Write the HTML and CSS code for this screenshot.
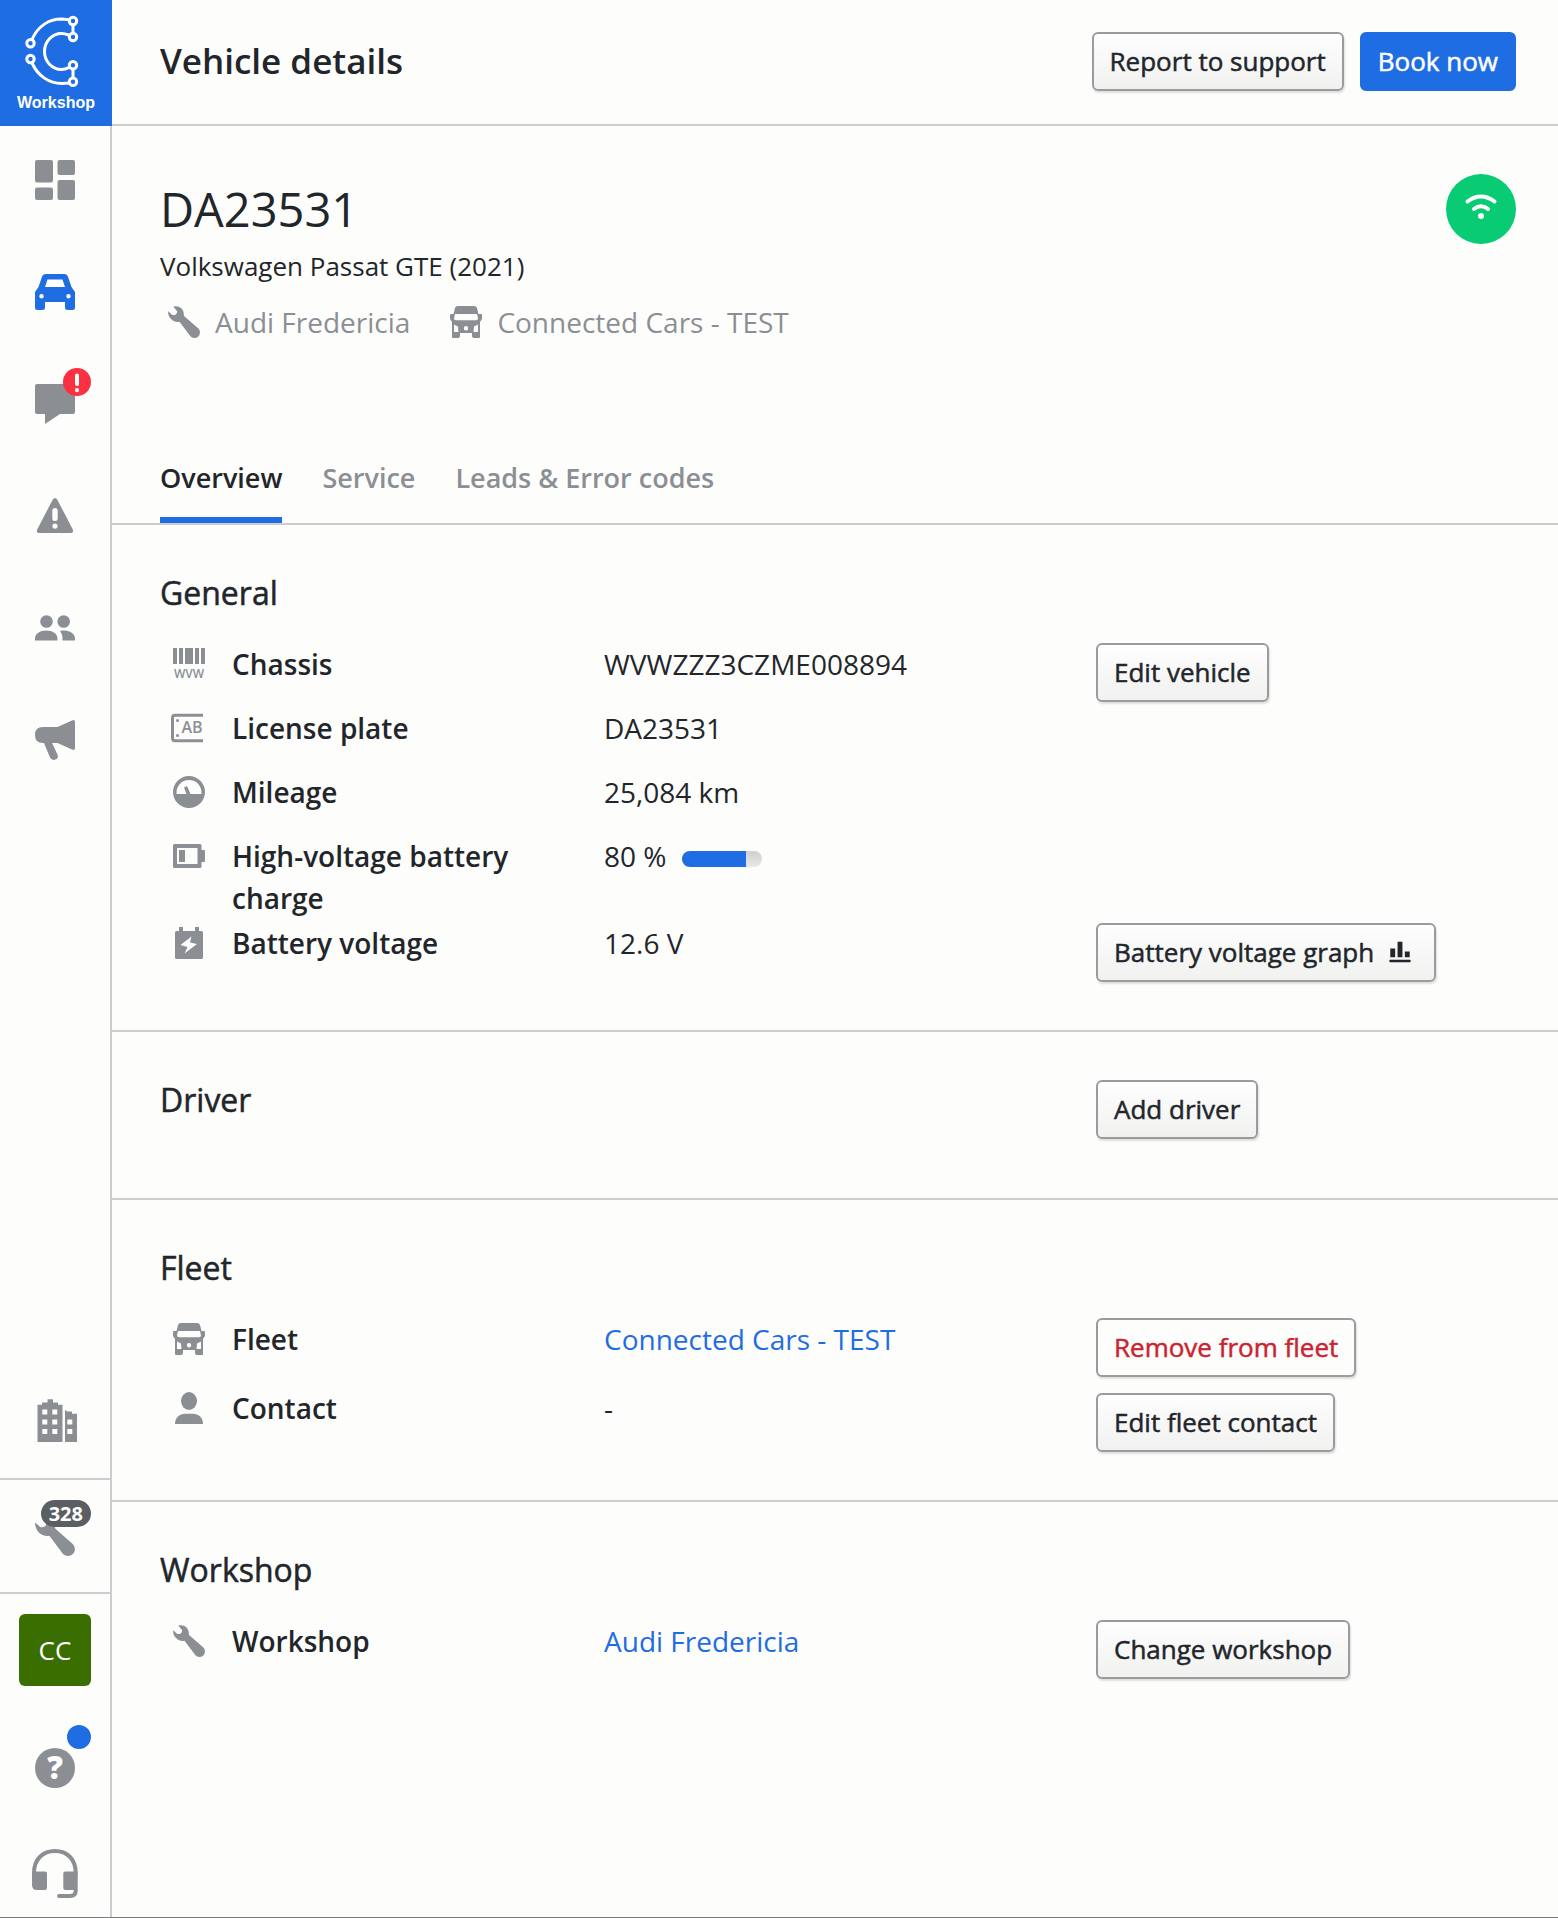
FILE: index.html
```html
<!DOCTYPE html>
<html lang="en">
<head>
<meta charset="utf-8">
<meta name="viewport" content="width=device-width, initial-scale=1">
<title>Vehicle details</title>
<link rel="stylesheet" href="styles.css">
</head>
<body>
<svg class="sprite" width="0" height="0" aria-hidden="true">
  <symbol id="wrench" viewBox="0 0 32 32"><path d="M5.300.6C10.800-1.200 16.200 3 15.800 8.800L16.300 10.200 30.400 22.500A5.500 5.500 0 0 1 22.400 30.300L11.500 15.800C5.500 17-.5 11.500.2 5.200L4.400 8.900Q8.600 9.600 9.300 5.400Z"/></symbol>
  <symbol id="van" viewBox="0 0 32 32"><path fill-rule="evenodd" d="M8 0H24Q26.500 0 27 2L28.500 8H31Q32 8 32 9V13L30 16V31Q30 32 29 32H24Q22 32 22 30V27H10V30Q10 32 8 32H3Q2 32 2 31V16L0 13V9Q0 8 1 8H3.500L5 2Q5.500 0 8 0ZM5 8 4 12.500Q4 14.300 6 14.300H26Q28 14.300 28 12.500L27 8ZM4 18.500V26H8.500L8 20.500ZM28 18.500 24 20.500 23.500 26H28ZM16 20A2.200 2.200 0 1 0 16 24.400 2.200 2.200 0 1 0 16 20Z"/></symbol>
</svg>
<div class="app">
  <aside class="sidebar">
    <a class="brand" href="#">
      <svg class="brand-mark" viewBox="0 0 112 90" aria-hidden="true">
        <g fill="none" stroke="currentColor" stroke-width="3">
          <path d="M32 39.500C38 26 49 19 62 19L69 19.700M68.700 35C66 34 64 33.500 61.500 33.500A17 18 0 0 0 61.500 69.500C64 69.500 66 69 68.800 67.500M32 63C38 76 49 83.500 62 83.500L69 83M73 25V33M73 69.500V77.500"/>
          <circle cx="73" cy="21" r="3.700"/><circle cx="73" cy="37" r="3.700"/><circle cx="30.500" cy="43.300" r="3.700"/><circle cx="30.500" cy="59" r="3.700"/><circle cx="73" cy="65.300" r="3.700"/><circle cx="73" cy="81.700" r="3.700"/>
        </g>
      </svg>
      <span class="brand-name">Workshop</span>
    </a>
    <nav class="nav" aria-label="Main">
      <a class="nav-item" href="#" aria-label="Dashboard"><svg class="nav-icon" viewBox="0 0 40 40"><rect width="18" height="22.500" rx="2"/><rect x="22.500" width="17.500" height="15" rx="2"/><rect y="27.500" width="18" height="12.500" rx="2"/><rect x="22.500" y="20" width="17.500" height="20" rx="2"/></svg></a>
      <a class="nav-item nav-item-active" href="#" aria-label="Vehicles" aria-current="page"><svg class="nav-icon" viewBox="0 -2 40 40"><path fill-rule="evenodd" d="M11 0H29C31 0 32.300 1 33 2.700L36.500 13 40 18V33.500Q40 36 37.500 36H33Q30 36 30 33.500V28H10V33.500Q10 36 7 36H2.500Q0 36 0 33.500V18L3.500 13 7 2.700C7.700 1 9 0 11 0ZM12.500 5.500 10 13H30L27.500 5.500ZM6.500 20A2.200 2.200 0 1 0 6.500 24.400 2.200 2.200 0 1 0 6.500 20ZM33.500 20A2.200 2.200 0 1 0 33.500 24.400 2.200 2.200 0 1 0 33.500 20Z"/></svg></a>
      <a class="nav-item" href="#" aria-label="Messages"><span class="nav-anchor"><svg class="nav-icon" viewBox="0 0 40 40"><path d="M2 0H38Q40 0 40 2V28Q40 30 38 30H25L10 40V30H2Q0 30 0 28V2Q0 0 2 0Z"/></svg><svg class="badge badge-alert" viewBox="0 0 28 28"><circle class="alert-fill" cx="14" cy="14" r="14"/><path class="alert-mark" d="M14 7.500V16M14 22V22.200"/></svg></span></a>
      <a class="nav-item" href="#" aria-label="Warnings"><svg class="nav-icon" viewBox="0 0 40 40"><path fill-rule="evenodd" d="M17.800 3.400Q20 .4 22.200 3.400L37.800 33.500Q39 37 36 37H4Q1 37 2.200 33.500ZM20 12Q17.300 12 17.300 14.500V22.500Q17.300 25 20 25T22.700 22.500V14.500Q22.700 12 20 12ZM20 27.500A2.600 2.600 0 1 0 20 32.700 2.600 2.600 0 1 0 20 27.500Z"/></svg></a>
      <a class="nav-item" href="#" aria-label="Customers"><svg class="nav-icon" viewBox="0 0 40 40"><circle cx="11.500" cy="13.500" r="6.300"/><circle cx="28.700" cy="13.500" r="6.300"/><path d="M0 32.500V30.500C0 25.500 5 22.500 11.300 22.500S22.500 25.500 22.500 30.500V32.500ZM25 23C34 21 40 25.500 40 30.500V32.500H27.500C27.500 28.500 27.500 26.500 25 23Z"/></svg></a>
      <a class="nav-item" href="#" aria-label="Campaigns"><svg class="nav-icon" viewBox="0 0 40 40"><path d="M8 7H22.500L37 .4Q40-.6 40 2V28Q40 31 37 29.600L22.500 23H17L22.500 34.500Q24 38 20.500 39.500 17 41 15 37.500L9 23H8Q0 23 0 15T8 7Z"/></svg></a>
    </nav>
    <div class="nav nav-bottom">
      <a class="nav-item" href="#" aria-label="Organisation"><svg class="nav-icon-large" viewBox="0 0 44 44"><path fill-rule="evenodd" d="M4.500 44V6.700H9V4.600H14.500V1.300H20V4.600H25V6.700H29.500V44ZM9.300 11.500V16.500H14.300V11.500ZM19.300 11.500V16.500H24.300V11.500ZM9.300 21.500V26.500H14.300V21.500ZM19.300 21.500V26.500H24.300V21.500ZM9.300 31V36H14.300V31ZM19.300 31V36H24.300V31ZM32 44V12L34.500 13.500H39V15.800H44V44ZM34.300 21.500V26.500H39.300V21.500ZM34.300 31V36H39.300V31Z"/></svg></a>
    </div>
    <div class="side-cell side-cell-lined">
      <a class="nav-anchor" href="#" aria-label="Jobs"><svg class="nav-icon"><use href="#wrench"/></svg><span class="badge badge-count">328</span></a>
    </div>
    <div class="side-cell"><button class="avatar" type="button">CC</button></div>
    <div class="side-cell side-cell-help">
      <a class="nav-anchor" href="#" aria-label="Help"><svg class="nav-icon" viewBox="0 0 40 40"><circle cx="20" cy="20" r="20"/><text class="help-mark" x="20" y="31" text-anchor="middle">?</text></svg><span class="badge badge-dot"></span></a>
    </div>
    <div class="side-cell side-cell-support">
      <a class="nav-anchor" href="#" aria-label="Support"><svg class="headset" viewBox="0 0 48 48"><path d="M1 22.500H14Q16 22.500 16 24.500V39Q16 41 14 41H6Q1 41 1 36ZM46.700 22.500H34.300Q32.300 22.500 32.300 24.500V39Q32.300 41 34.300 41H44Z"/><path fill="none" stroke="currentColor" stroke-width="4" stroke-linecap="round" d="M3 24C3 10 12 2 24 2S44.700 10 44.700 24V42Q44.700 47 39 47H28"/></svg></a>
    </div>
  </aside>

  <div class="page">
    <header class="topbar">
      <h1 class="page-title">Vehicle details</h1>
      <div class="topbar-actions">
        <button class="button" type="button">Report to support</button>
        <button class="button button-primary" type="button">Book now</button>
      </div>
    </header>

    <main>
      <section class="hero">
        <div class="hero-head">
          <h2 class="plate">DA23531</h2>
          <svg class="online" viewBox="0 0 70 70" role="img" aria-label="Online"><circle cx="35" cy="35" r="35"/><path class="online-waves" d="M21.500 27.500Q35 17.500 48.500 27.500M28 35Q35 29.500 42 35"/><circle class="online-dot" cx="35" cy="42" r="3"/></svg>
        </div>
        <p class="model">Volkswagen Passat GTE (2021)</p>
        <ul class="meta">
          <li class="meta-item"><svg class="icon"><use href="#wrench"/></svg>Audi Fredericia</li>
          <li class="meta-item"><svg class="icon"><use href="#van"/></svg>Connected Cars - TEST</li>
        </ul>
      </section>

      <nav class="tabs" aria-label="Vehicle">
        <a class="tab tab-active" href="#" aria-current="page">Overview</a>
        <a class="tab" href="#">Service</a>
        <a class="tab" href="#">Leads &amp; Error codes</a>
      </nav>

      <section class="section">
        <h3 class="section-title">General</h3>
        <div class="section-body">
          <dl class="list">
            <div class="row">
              <svg class="icon" viewBox="0 0 32 32"><path d="M0 0H4V16H0ZM6 0H10V16H6ZM12 0H20V16H12ZM22 0H26V16H22ZM28 0H32V16H28Z"/><text class="icon-vin" x="16" y="30" text-anchor="middle">WVW</text></svg>
              <dt>Chassis</dt><dd>WVWZZZ3CZME008894</dd>
            </div>
            <div class="row">
              <svg class="icon" viewBox="0 0 32 32"><path class="icon-line" d="M30 3.300H2Q-.5 3.300-.5 6V26Q-.5 28.700 2 28.700H30"/><circle cx="4.500" cy="8.500" r="1.500"/><circle cx="4.500" cy="23.500" r="1.500"/><text class="icon-plate" x="19" y="21" text-anchor="middle">AB</text></svg>
              <dt>License plate</dt><dd>DA23531</dd>
            </div>
            <div class="row">
              <svg class="icon" viewBox="0 0 32 32"><path fill-rule="evenodd" d="M16 0A16 16 0 1 0 16 32 16 16 0 1 0 16 0ZM3.600 18A12.500 12.500 0 1 1 28.400 18H17.500L14 10 11 11.500 13.500 18Z"/></svg>
              <dt>Mileage</dt><dd>25,084 km</dd>
            </div>
            <div class="row">
              <svg class="icon" viewBox="0 0 32 32"><path fill-rule="evenodd" d="M1.500 4H27Q28.500 4 28.500 5.500V10H31Q32 10 32 11V21Q32 22 31 22H28.500V26.500Q28.500 28 27 28H1.500Q0 28 0 26.500V5.500Q0 4 1.500 4ZM4 8V24H24.500V8ZM6 10H12V22H6Z"/></svg>
              <dt>High-voltage battery charge</dt>
              <dd class="charge">80 %<span class="meter" role="meter" aria-label="Battery charge" aria-valuemin="0" aria-valuemax="100" aria-valuenow="80"><span class="meter-fill" style="width: 80%"></span></span></dd>
            </div>
            <div class="row">
              <svg class="icon" viewBox="0 0 32 32"><path fill-rule="evenodd" d="M6 4V0H10V4H22V0H26V4H28.500Q30 4 30 5.500V30.500Q30 32 28.500 32H3.500Q2 32 2 30.500V5.500Q2 4 3.500 4ZM18.500 9.500 7.500 18 14.500 20 11.500 26.500 24 17 17 15.500Z"/></svg>
              <dt>Battery voltage</dt><dd>12.6 V</dd>
            </div>
          </dl>
          <div class="actions">
            <button class="button" type="button">Edit vehicle</button>
            <button class="button" type="button">Battery voltage graph<svg class="chart" viewBox="0 0 36 36"><path d="M8 14H13V23H8ZM15.500 7H20.500V23H15.500ZM23 17H28V23H23Z"/><rect x="7" y="25.500" width="22" height="2.500" rx="1"/></svg></button>
          </div>
        </div>
      </section>

      <section class="section section-inline">
        <h3 class="section-title">Driver</h3>
        <div><button class="button" type="button">Add driver</button></div>
      </section>

      <section class="section">
        <h3 class="section-title">Fleet</h3>
        <div class="section-body">
          <dl class="list list-roomy">
            <div class="row"><svg class="icon"><use href="#van"/></svg><dt>Fleet</dt><dd><a class="link" href="#">Connected Cars - TEST</a></dd></div>
            <div class="row"><svg class="icon" viewBox="0 0 32 32"><ellipse cx="16" cy="9" rx="8" ry="9"/><path d="M2 32C2 25 7 21.700 12 21.700H20C25 21.700 30 25 30 32Z"/></svg><dt>Contact</dt><dd>-</dd></div>
          </dl>
          <div class="actions">
            <button class="button button-danger" type="button">Remove from fleet</button>
            <button class="button" type="button">Edit fleet contact</button>
          </div>
        </div>
      </section>

      <section class="section">
        <h3 class="section-title">Workshop</h3>
        <div class="section-body">
          <dl class="list">
            <div class="row"><svg class="icon"><use href="#wrench"/></svg><dt>Workshop</dt><dd><a class="link" href="#">Audi Fredericia</a></dd></div>
          </dl>
          <div class="actions">
            <button class="button" type="button">Change workshop</button>
          </div>
        </div>
      </section>
    </main>
  </div>
</div>
</body>
</html>
```
FILE: styles.css
```css
:root {
  --text: #22262b;
  --muted: #8b8f94;
  --line: #cdcdcf;
  --blue: #1f6de2;
  --bg: #fdfdfc;
}

* {
  box-sizing: border-box;
}

body {
  margin: 0;
  background: var(--bg);
  color: var(--text);
  font-family: "Open Sans", "Noto Sans", sans-serif;
  font-size: 28px;
  line-height: 42px;
}

h1, h2, h3, p, ul, dl, dd {
  margin: 0;
  padding: 0;
}

a {
  color: inherit;
  text-decoration: none;
}

svg {
  display: block;
  fill: currentColor;
  flex: none;
  overflow: visible;
}

.sprite {
  position: absolute;
}

.app {
  display: flex;
  min-height: 100vh;
  border-bottom: 1px solid #77797c;
}

/* Sidebar */
.sidebar {
  display: flex;
  flex-direction: column;
  flex: none;
  width: 112px;
  border-right: 2px solid var(--line);
  color: var(--muted);
}

.brand {
  width: 112px;
  height: 126px;
  background: var(--blue);
  color: #fff;
  text-align: center;
}

.brand-mark {
  width: 112px;
  height: 90px;
}

.brand-name {
  display: block;
  font: bold 16px/26px "Liberation Sans", sans-serif;
}

.nav {
  display: flex;
  flex-direction: column;
  gap: 4px;
}

.nav-bottom {
  margin-top: auto;
  padding-bottom: 4px;
}

.nav-item {
  display: flex;
  align-items: center;
  justify-content: center;
  height: 108px;
}

.nav-item-active {
  color: var(--blue);
}

.nav-anchor {
  position: relative;
}

.nav-icon {
  width: 40px;
  height: 40px;
}

.nav-icon-large {
  width: 44px;
  height: 44px;
}

.headset {
  width: 48px;
  height: 48px;
}

.badge {
  position: absolute;
  right: -16px;
}

.badge-alert {
  top: -16px;
  width: 28px;
  height: 28px;
}

.alert-fill {
  fill: #fb3040;
}

.alert-mark {
  stroke: #fff;
  stroke-width: 4px;
  stroke-linecap: round;
}

.badge-count {
  top: -16px;
  padding: 0 8px;
  border-radius: 14px;
  background: #5b5f63;
  color: #fff;
  font-size: 20px;
  font-weight: 700;
  line-height: 27px;
}

.badge-dot {
  top: -23px;
  width: 24px;
  height: 24px;
  border-radius: 50%;
  background: var(--blue);
}

.side-cell {
  display: flex;
  align-items: center;
  justify-content: center;
  height: 112px;
}

.side-cell-lined {
  height: 116px;
  border-top: 2px solid var(--line);
  border-bottom: 2px solid var(--line);
}

.side-cell-help {
  height: 124px;
}

.side-cell-support {
  height: 87px;
  padding-bottom: 2px;
}

.help-mark {
  fill: #fff;
  font-size: 31px;
  font-weight: 800;
}

.avatar {
  width: 72px;
  height: 72px;
  padding: 0;
  border: 0;
  border-radius: 6px;
  background: #3b6e00;
  color: #fff;
  font: inherit;
  font-size: 26px;
}

/* Page */
.page {
  flex: 1;
  min-width: 0;
}

.topbar {
  display: flex;
  align-items: center;
  justify-content: space-between;
  height: 126px;
  padding: 0 42px 2px 48px;
  border-bottom: 2px solid var(--line);
}

.page-title {
  font-size: 35px;
  font-weight: 600;
}

.topbar-actions {
  display: flex;
  gap: 16px;
}

.button {
  display: inline-flex;
  align-items: center;
  gap: 8px;
  padding: 10px 16px;
  border: 2px solid #999b9f;
  border-radius: 6px;
  background: linear-gradient(#fefefe, #f1f1f0);
  box-shadow: 1px 2px 2px rgba(0, 0, 0, 0.12);
  color: var(--text);
  font: 500 26px/35px "Open Sans", "Noto Sans", sans-serif;
  -webkit-text-stroke: 0.5px;
  white-space: nowrap;
}

.button-primary {
  border-color: var(--blue);
  background: var(--blue);
  box-shadow: none;
  color: #fff;
}

.button-danger {
  background: var(--bg);
  color: #cb2431;
}

.chart {
  width: 36px;
  height: 35px;
}

.hero {
  padding: 48px 42px 114px 48px;
}

.hero-head {
  display: flex;
  align-items: center;
  justify-content: space-between;
}

.plate {
  font-size: 47px;
  font-weight: 400;
  line-height: 70px;
}

.online {
  width: 70px;
  height: 70px;
  color: #08cb74;
}

.online-waves {
  fill: none;
  stroke: #fff;
  stroke-width: 4px;
  stroke-linecap: round;
}

.online-dot {
  fill: #fff;
}

.model {
  padding: 2px 0 15px;
  font-size: 26px;
  line-height: 40px;
}

.meta {
  display: flex;
  gap: 40px;
  padding-left: 8px;
  color: var(--muted);
  list-style: none;
}

.meta-item {
  display: flex;
  align-items: center;
  gap: 15px;
}

.icon {
  width: 32px;
  height: 32px;
}

.tabs {
  display: flex;
  gap: 40px;
  padding-left: 48px;
  border-bottom: 2px solid var(--line);
}

.tab {
  padding-bottom: 18px;
  border-bottom: 6px solid transparent;
  color: var(--muted);
  font-size: 27px;
  font-weight: 600;
}

.tab-active {
  border-color: var(--blue);
  color: var(--text);
}

.section {
  padding: 48px 42px 46px 48px;
}

.section + .section {
  border-top: 2px solid var(--line);
}

.section-title {
  margin-bottom: 28px;
  font-size: 32px;
  font-weight: 500;
  line-height: 40px;
  -webkit-text-stroke: 0.5px;
}

.section-body,
.section-inline {
  display: grid;
  grid-template-columns: 936fr 420fr;
}

.section-inline {
  padding-bottom: 50px;
}

.row {
  display: grid;
  grid-template-columns: 59px 372fr 492fr;
  min-height: 64px;
  padding: 2px 0 1px;
  margin-left: 13px;
}

.list-roomy .row {
  min-height: 69px;
}

.row .icon {
  margin-top: 5px;
  color: var(--muted);
}

.row dt {
  padding-right: 48px;
  font-weight: 600;
}

.icon-vin {
  font-size: 12px;
  font-weight: 600;
}

.icon-plate {
  font-size: 16px;
  font-weight: 600;
}

.icon-line {
  fill: none;
  stroke: currentColor;
  stroke-width: 3px;
}

.charge {
  display: flex;
  align-items: baseline;
  gap: 16px;
}

.meter {
  display: block;
  width: 80px;
  height: 16px;
  overflow: hidden;
  border-radius: 8px;
  background: linear-gradient(#cfcfcf, #e8e8e6);
}

.meter-fill {
  display: block;
  height: 100%;
  background: var(--blue);
}

.link {
  color: var(--blue);
}

.actions {
  display: flex;
  flex-direction: column;
  align-items: flex-start;
  justify-content: space-between;
  gap: 16px;
  padding: 2px 0;
}
```
